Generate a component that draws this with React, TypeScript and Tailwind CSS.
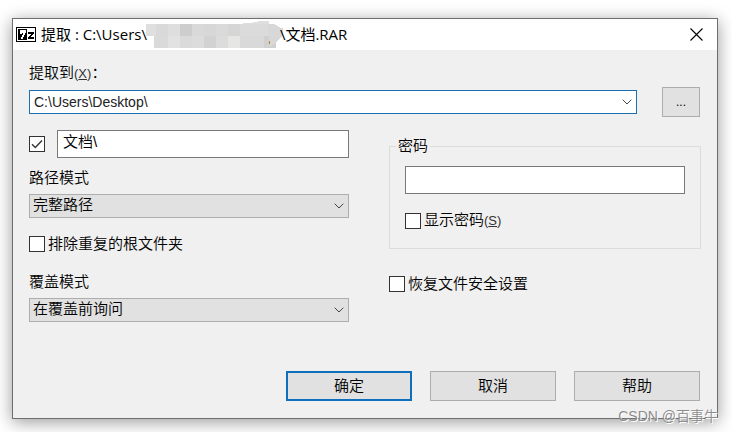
import { useState, type ReactNode } from 'react'

const pathModes = ['完整路径', '不包含路径', '绝对路径']
const overwriteModes = ['在覆盖前询问', '覆盖时不提示', '跳过已存在的文件', '自动重命名']

const buttonClass =
  'h-[30px] border border-[#adadad] bg-[#e1e1e1] text-center hover:border-[#0078d7] hover:bg-[#e5f1fb]'
const fieldClass = 'h-7 w-full min-w-0 border border-[#7a7a7a] bg-white px-[5px] outline-none'

// Tiles hiding the middle part of the archive path
const tiles = [
  { x: 0, y: 3, w: 10, fill: '#dfdfdf' },
  { x: 10, y: 3, w: 12, fill: '#d9d9d9' },
  { x: 22, y: 3, w: 12, fill: '#dedede' },
  { x: 34, y: 3, w: 12, fill: '#cdcdcd' },
  { x: 46, y: 3, w: 12, fill: '#d9d9d9' },
  { x: 58, y: 3, w: 12, fill: '#d7d7d7' },
  { x: 70, y: 3, w: 12, fill: '#dadada' },
  { x: 82, y: 3, w: 12, fill: '#d6d6d6' },
  { x: 94, y: 3, w: 34, fill: '#dbdbdb' },
  { x: 8, y: 15, w: 14, fill: '#dadada' },
  { x: 22, y: 15, w: 12, fill: '#e2e2e2' },
  { x: 34, y: 15, w: 12, fill: '#dadada' },
  { x: 46, y: 15, w: 12, fill: '#dcdcdc' },
  { x: 58, y: 15, w: 12, fill: '#d2d2d2' },
  { x: 70, y: 15, w: 12, fill: '#dcdcdc' },
  { x: 82, y: 15, w: 12, fill: '#e6e6e4' },
  { x: 94, y: 15, w: 24, fill: '#d9d9d9' },
  { x: 118, y: 15, w: 12, fill: '#d0d0ce' },
]

function SevenZipIcon() {
  return (
    <svg width="20" height="15" viewBox="0 0 20 15" shapeRendering="crispEdges" aria-hidden="true">
      <rect width="20" height="15" fill="#000" />
      <rect x="1" y="1" width="18" height="13" fill="#fff" />
      <rect x="2" y="2" width="9" height="11" fill="#000" />
      <path d="M4 3h6v3h-1v2h-1v2h-1v2h-2v-2h1v-2h1v-2h-1v1h-2z" fill="#fff" />
      <path d="M12 5h6v2h-1v1h-1v1h-1v1h3v2h-6v-2h1v-1h1v-1h1v-1h-3z" fill="#000" />
    </svg>
  )
}

function Mosaic() {
  return (
    <svg
      className="-ml-px -mr-1"
      width="138"
      height="27"
      viewBox="0 0 138 27"
      shapeRendering="crispEdges"
      aria-hidden="true"
    >
      {tiles.map((t) => (
        <rect key={`${t.x}-${t.y}`} x={t.x} y={t.y} width={t.w} height="12" fill={t.fill} />
      ))}
      <path d="M92 3l20-2v-1h11v3z" fill="#dedede" />
      <path d="M122 3h6l7 4h2v7l-3 3-4 5-5 3h-2v-10h-1z" fill="#d8d8d8" />
      <rect x="123" y="20" width="1" height="3" fill="#c07a20" />
    </svg>
  )
}

function Chevron() {
  return (
    <svg
      className="pointer-events-none col-start-1 row-start-1 mr-[5px] self-center justify-self-end"
      width="10"
      height="6"
      viewBox="0 0 10 6"
      fill="none"
      stroke="#444"
      aria-hidden="true"
    >
      <path d="M0.7 0.7L5 5L9.3 0.7" />
    </svg>
  )
}

function Dropdown({ id, options }: { id: string; options: string[] }) {
  return (
    <div className="mt-1.5 grid">
      <select
        id={id}
        className="col-start-1 row-start-1 h-6 w-full appearance-none border border-[#adadad] bg-[#e1e1e1] pb-0.5 pl-[3px] pr-6 outline-none"
      >
        {options.map((o) => (
          <option key={o}>{o}</option>
        ))}
      </select>
      <Chevron />
    </div>
  )
}

function Checkbox({
  label,
  children,
  defaultChecked,
}: {
  label?: string
  children?: ReactNode
  defaultChecked?: boolean
}) {
  return (
    <label className="flex items-center gap-[3px]">
      <span className="grid">
        <input
          type="checkbox"
          aria-label={label}
          defaultChecked={defaultChecked}
          className="peer col-start-1 row-start-1 size-4 appearance-none border border-[#333] bg-white"
        />
        <svg
          className="pointer-events-none invisible col-start-1 row-start-1 peer-checked:visible"
          width="16"
          height="16"
          viewBox="0 0 16 16"
          fill="none"
          stroke="#333"
          strokeWidth="1.4"
          aria-hidden="true"
        >
          <path d="M3 8.2L6.3 11.5L13 4.6" />
        </svg>
      </span>
      {children && <span>{children}</span>}
    </label>
  )
}

function Key({ children }: { children: string }) {
  return (
    <span className="text-[13px] text-[#333]">
      (<span className="underline">{children}</span>)
    </span>
  )
}

export default function App() {
  const [target, setTarget] = useState('C:\\Users\\Desktop\\')
  const [folder, setFolder] = useState('文档\\')

  return (
    <div className="relative bg-white pb-[13px] pl-3 pr-3.5 pt-[18px] font-['Liberation_Sans','Noto_Sans_CJK_SC',sans-serif] text-[15px] font-[350] leading-5 text-black">
      <main className="border border-[#6e6e6e] bg-[#f0f0f0] shadow-[0_3px_16px_rgba(0,0,0,0.4)]">
        <header className="flex h-[31px] items-center bg-white pl-[3px] pr-3.5">
          <SevenZipIcon />
          <h1 className="ml-[5px] flex items-center whitespace-pre pb-px font-['Open_Sans','Noto_Sans_CJK_SC',sans-serif] text-[15px] font-normal">
            提取 : C:\Users\
            <Mosaic />
            \文档.RAR
          </h1>
          <button type="button" aria-label="关闭" className="ml-auto">
            <svg width="13" height="13" viewBox="0 0 13 13" stroke="#000" strokeWidth="1.1" aria-hidden="true">
              <path d="M0.5 0.5L12.5 12.5M12.5 0.5L0.5 12.5" />
            </svg>
          </button>
        </header>

        <form className="px-4 pb-[17px] pt-[13px]" onSubmit={(e) => e.preventDefault()}>
          <label htmlFor="target" className="block">
            提取到<Key>X</Key>：
          </label>
          <div className="mr-px mt-[3px] flex items-center gap-[25px]">
            <div className="grid flex-1">
              <input
                id="target"
                value={target}
                onChange={(e) => setTarget(e.target.value)}
                className="col-start-1 row-start-1 h-6 w-full border border-[#1a6fae] bg-white pb-px pl-1 pr-6 text-[14px] text-[#222] outline-none"
              />
              <Chevron />
            </div>
            <button type="button" aria-label="浏览" className={`${buttonClass} w-[38px] text-[12px]`}>
              ...
            </button>
          </div>

          <div className="mt-[13px] grid grid-cols-[320fr_312fr] gap-10">
            <div>
              <div className="flex items-center gap-3">
                <Checkbox label="使用子文件夹" defaultChecked />
                <input
                  aria-label="子文件夹"
                  value={folder}
                  onChange={(e) => setFolder(e.target.value)}
                  className={`${fieldClass} pb-2`}
                />
              </div>
              <label htmlFor="path-mode" className="mt-2.5 block">
                路径模式
              </label>
              <Dropdown id="path-mode" options={pathModes} />
              <div className="mt-4">
                <Checkbox>排除重复的根文件夹</Checkbox>
              </div>
              <label htmlFor="overwrite-mode" className="mt-[18px] block">
                覆盖模式
              </label>
              <Dropdown id="overwrite-mode" options={overwriteModes} />
            </div>

            <div>
              <fieldset className="mt-1.5 border border-[#dcdcdc] px-1.5 pb-[17px]">
                <legend className="px-0.5">密码</legend>
                <div className="px-[9px] pt-2.5">
                  <input type="password" aria-label="密码" className={`${fieldClass} block`} />
                  <div className="mt-4">
                    <Checkbox>
                      显示密码<Key>S</Key>
                    </Checkbox>
                  </div>
                </div>
              </fieldset>
              <div className="mt-[25px]">
                <Checkbox>恢复文件安全设置</Checkbox>
              </div>
            </div>
          </div>

          <div className="mr-px mt-[49px] flex justify-end gap-[18px]">
            <button
              type="submit"
              className="h-[30px] w-[126px] border-2 border-[#0f6fbd] bg-[#e1e1e1] text-center"
            >
              确定
            </button>
            <button type="button" className={`${buttonClass} w-[126px]`}>
              取消
            </button>
            <button type="button" className={`${buttonClass} w-[126px]`}>
              帮助
            </button>
          </div>
        </form>
      </main>
      <span className="absolute bottom-1.5 right-3.5 text-[14px] text-[#8c8c8c] [text-shadow:1px_1px_0_#fff]">
        CSDN @百事牛
      </span>
    </div>
  )
}
